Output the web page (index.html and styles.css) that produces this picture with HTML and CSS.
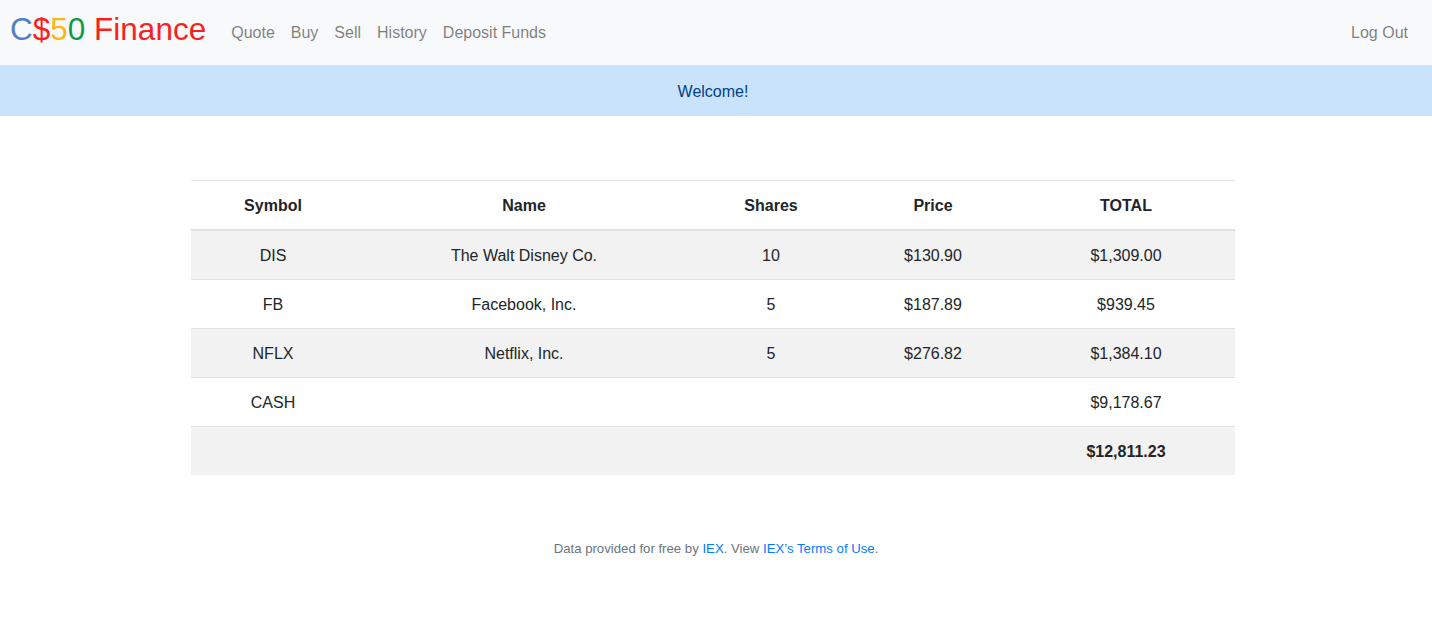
FILE: index.html
```html
<!DOCTYPE html>
<html lang="en">
<head>
<meta charset="utf-8">
<title>C$50 Finance: Portfolio</title>
<link rel="stylesheet" href="styles.css">
</head>
<body>
<nav class="navbar">
  <a class="brand" href="#"><span class="blue">C</span><span class="red">$</span><span class="yellow">5</span><span class="green">0</span> <span class="red">Finance</span></a>
  <ul class="nav-links">
    <li><a href="#">Quote</a></li>
    <li><a href="#">Buy</a></li>
    <li><a href="#">Sell</a></li>
    <li><a href="#">History</a></li>
    <li><a href="#">Deposit Funds</a></li>
  </ul>
  <ul class="nav-links nav-right">
    <li><a href="#">Log Out</a></li>
  </ul>
</nav>
<header class="alert">Welcome!</header>
<main class="main">
  <table class="portfolio">
    <thead>
      <tr>
        <th class="c-sym">Symbol</th>
        <th class="c-name">Name</th>
        <th class="c-shares">Shares</th>
        <th class="c-price">Price</th>
        <th class="c-total">TOTAL</th>
      </tr>
    </thead>
    <tbody>
      <tr><td>DIS</td><td>The Walt Disney Co.</td><td>10</td><td>$130.90</td><td>$1,309.00</td></tr>
      <tr><td>FB</td><td>Facebook, Inc.</td><td>5</td><td>$187.89</td><td>$939.45</td></tr>
      <tr><td>NFLX</td><td>Netflix, Inc.</td><td>5</td><td>$276.82</td><td>$1,384.10</td></tr>
      <tr><td>CASH</td><td></td><td></td><td></td><td>$9,178.67</td></tr>
      <tr><td></td><td></td><td></td><td></td><td class="grand">$12,811.23</td></tr>
    </tbody>
  </table>
</main>
<footer class="footer">Data provided for free by <a href="#">IEX</a>. View <a href="#">IEX’s Terms of Use</a>.</footer>
</body>
</html>
```
FILE: styles.css
```css
* { box-sizing: border-box; }
html, body { margin: 0; padding: 0; }
body {
  font-family: "Liberation Sans", Arial, sans-serif;
  font-size: 16px;
  line-height: 1.5;
  color: #212529;
  background: #fff;
}
a { text-decoration: none; }

.navbar {
  display: flex;
  align-items: center;
  height: 66px;
  padding: 0 16px 0 10px;
  background: #f8f9fa;
  border-bottom: 1px solid #dee2e6;
}
.brand {
  font-size: 31.5px;
  line-height: 1;
  margin-right: 17px;
  padding-bottom: 5px;
  white-space: nowrap;
}
.blue { color: #5380c6; }
.red { color: #fb1f1f; }
.yellow { color: #fdb614; }
.green { color: #119b49; }

.nav-links {
  display: flex;
  list-style: none;
  margin: 0;
  padding: 0;
}
.nav-links a {
  display: block;
  padding: 0 8px;
  color: rgba(0, 0, 0, 0.5);
  font-size: 16px;
}
.nav-right { margin-left: auto; }

.alert {
  height: 50px;
  padding: 14px 20px 10px 14px;
  background: #c9e3fd;
  color: #004085;
  text-align: center;
}

.main {
  padding: 64px 191px 0 191px;
}
.portfolio {
  width: 1044px;
  border-collapse: collapse;
  text-align: center;
}
.portfolio th, .portfolio td {
  padding: 13px 12px 11px;
  height: 49px;
  border-top: 1px solid #dee2e6;
  vertical-align: top;
}
.portfolio thead th {
  font-weight: bold;
  border-bottom: 2px solid #dee2e6;
  height: 49px;
  padding-top: 13px;
  padding-bottom: 10px;
}
.c-sym { width: 164px; }
.c-name { width: 338px; }
.c-shares { width: 156px; }
.c-price { width: 168px; }
.c-total { width: 218px; }
.portfolio tbody tr:nth-child(odd) { background: #f2f2f2; }
.portfolio tbody tr:first-child td { border-top: 0; }
.grand { font-weight: bold; }

.footer {
  margin-top: 64px;
  text-align: center;
  font-size: 13.2px;
  color: #6c757d;
}
.footer a { color: #007bff; }
```
